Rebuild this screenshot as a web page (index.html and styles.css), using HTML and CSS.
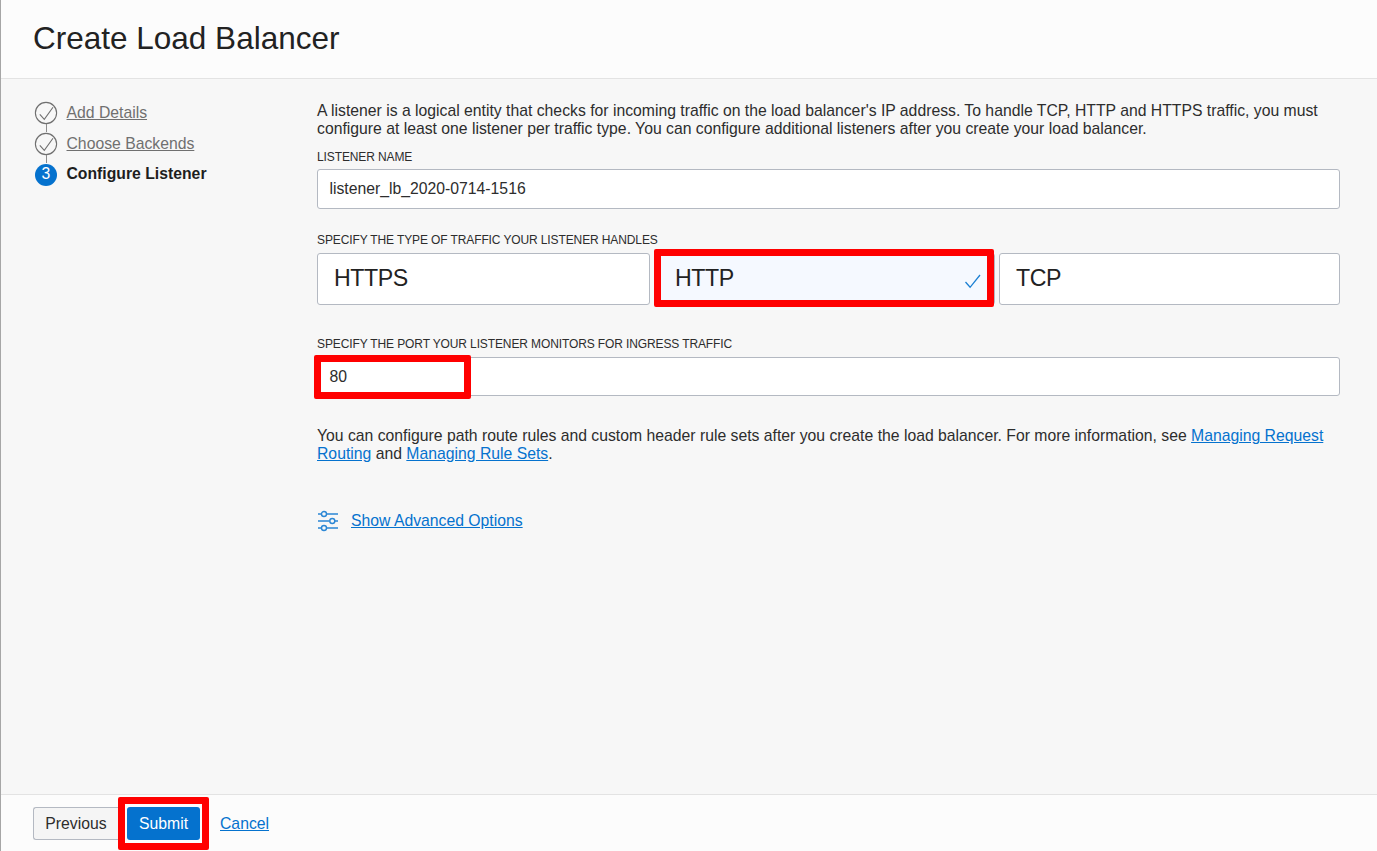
FILE: index.html
```html
<!DOCTYPE html>
<html lang="en">
<head>
<meta charset="utf-8">
<title>Create Load Balancer</title>
<link rel="stylesheet" href="styles.css">
</head>
<body>
<div class="panel">
  <header class="header"><h1 class="title">Create Load Balancer</h1></header>
  <div class="body">
    <nav class="steps">
      <div class="step">
        <svg class="step-icon" width="24" height="31" viewBox="0 0 24 31"><circle cx="12" cy="12" r="10.6"/><path d="M5.800 13.300l4.500 5 8.700-12"/><path class="step-line" d="M12.500 23v8"/></svg>
        <a class="step-link" href="#">Add Details</a>
      </div>
      <div class="step">
        <svg class="step-icon" width="24" height="31" viewBox="0 0 24 31"><circle cx="12" cy="12" r="10.6"/><path d="M5.800 13.300l4.500 5 8.700-12"/><path class="step-line" d="M12.500 23v8"/></svg>
        <a class="step-link" href="#">Choose Backends</a>
      </div>
      <div class="step">
        <span class="step-number">3</span>
        <span class="step-current">Configure Listener</span>
      </div>
    </nav>
    <main class="form">
      <p class="intro">A listener is a logical entity that checks for incoming traffic on the load balancer's IP address. To handle TCP, HTTP and HTTPS traffic, you must<br>configure at least one listener per traffic type. You can configure additional listeners after you create your load balancer.</p>
      <div class="label label-name">LISTENER NAME</div>
      <div class="input input-name">listener_lb_2020-0714-1516</div>
      <div class="label label-type">SPECIFY THE TYPE OF TRAFFIC YOUR LISTENER HANDLES</div>
      <div class="choices">
        <div class="choice">HTTPS</div>
        <div class="choice choice-selected">HTTP
          <svg class="choice-check" width="18" height="18" viewBox="0 0 18 18"><path d="M1.5 9l4.6 5.3L16 2"/></svg>
          <span class="highlight highlight-choice"></span>
        </div>
        <div class="choice">TCP</div>
      </div>
      <div class="label label-port">SPECIFY THE PORT YOUR LISTENER MONITORS FOR INGRESS TRAFFIC</div>
      <div class="input input-port">80<span class="highlight highlight-port"></span></div>
      <p class="note">You can configure path route rules and custom header rule sets after you create the load balancer. For more information, see <a href="#">Managing Request<br>Routing</a> and <a href="#">Managing Rule Sets</a>.</p>
      <div class="advanced">
        <svg class="advanced-icon" width="22" height="22" viewBox="0 0 22 22"><path d="M1 4h3.5M9.500 4H21M1 11h11.500M18 11H21M1 18h3.500M9.500 18H21"/><circle cx="7" cy="4" r="2.500"/><circle cx="15.300" cy="11" r="2.500"/><circle cx="7" cy="18" r="2.500"/></svg>
        <a href="#">Show Advanced Options</a>
      </div>
    </main>
  </div>
  <footer class="footer">
    <div class="button button-previous">Previous</div>
    <div class="submit-wrap"><div class="button button-submit">Submit</div></div>
    <a class="cancel" href="#">Cancel</a>
  </footer>
</div>
</body>
</html>
```

FILE: styles.css
```css
* { box-sizing: border-box; }
body {
  margin: 0;
  font: 15.750px/18px "Liberation Sans", Arial, sans-serif;
  color: #2d2d2d;
  background: #f7f7f7;
}
a { color: #0572ce; text-decoration: underline; }
p { margin: 0; }
.panel {
  display: flex;
  flex-direction: column;
  height: 851px;
  border-left: 1px solid #a6a6a6;
  overflow: hidden;
}
.header {
  height: 79px;
  padding: 18px 32px 0;
  background: #fcfcfc;
  border-bottom: 1px solid #e3e3e3;
}
.title {
  margin: 0;
  font-size: 31.500px;
  line-height: 40px;
  font-weight: 400;
  color: #222;
}
.body { display: flex; flex: 1; }
.steps { width: 316px; padding: 22px 0 0 33px; }
.step { display: flex; height: 31px; gap: 8.500px; }
.step + .step { height: 30.500px; }
.step-icon { fill: none; stroke: #707070; stroke-width: 1.100; flex: none; }
.step-line { stroke: #8c8c8c; stroke-width: 1; }
.step-link { color: #707070; margin-top: 3px; }
.step-number {
  width: 22px;
  height: 22px;
  margin: 1px 1px 0;
  border-radius: 50%;
  background: #0572ce;
  color: #fff;
  text-align: center;
  line-height: 20px;
}
.step-current { font-weight: 700; color: #1e1e1e; margin-top: 2px; }
.form { width: 1023px; padding-top: 23px; }
.intro, .note { white-space: nowrap; }
.label { font-size: 12px; letter-spacing: -0.115px; line-height: 14px; white-space: nowrap; }
.label-name { margin: 12px 0 5px; }
.input {
  position: relative;
  padding-left: 11.500px;
  background: #fff;
  border: 1px solid #b4b9c2;
  border-radius: 3px;
}
.input-name { height: 40px; line-height: 38px; }
.label-type { margin: 24px 0 6px; }
.choices { display: grid; grid-template-columns: 333px 340px 341px; column-gap: 4.500px; }
.choice {
  position: relative;
  height: 52px;
  padding-left: 16px;
  background: #fff;
  border: 1px solid #b4b9c2;
  border-radius: 3px;
  font-size: 23.200px;
  letter-spacing: -0.450px;
  line-height: 48px;
  color: #222;
}
.choice-selected { background: #f5f9ff; padding-left: 19.500px; }
.choice-check {
  position: absolute;
  right: 12px;
  top: 19px;
  fill: none;
  stroke: #1c80d3;
  stroke-width: 1.300;
}
.highlight { position: absolute; border: 7px solid #f00; border-radius: 2px; }
.highlight-choice { inset: -5px -0.500px -3px -1.500px; }
.label-port { margin: 32px 0 6px; }
.input-port { height: 39px; line-height: 37px; }
.highlight-port { left: -4px; top: -3px; width: 157px; height: 44px; }
.note { margin-top: 31px; }
.advanced { display: flex; align-items: center; gap: 12px; margin-top: 47px; height: 22px; }
.advanced a { margin-top: -1px; }
.advanced-icon { fill: none; stroke: #2b87d5; stroke-width: 1.400; }
.footer {
  display: flex;
  height: 57px;
  background: #fcfcfc;
  border-top: 1px solid #e3e3e3;
  padding-left: 32px;
}
.button { height: 33px; line-height: 31px; border-radius: 3px; text-align: center; }
.button-previous {
  width: 85px;
  margin-top: 12px;
  border: 1px solid #b4b9c2;
  border-right: 0;
  background: #f5f5f5;
  border-radius: 3px 0 0 3px;
}
.submit-wrap {
  width: 91px;
  height: 53px;
  margin-top: 2px;
  padding: 3px 2px;
  border: 7px solid #f00;
  border-radius: 2px;
}
.button-submit { background: #0572ce; color: #fff; line-height: 33px; }
.cancel { margin: 20px 0 0 11px; }
```
